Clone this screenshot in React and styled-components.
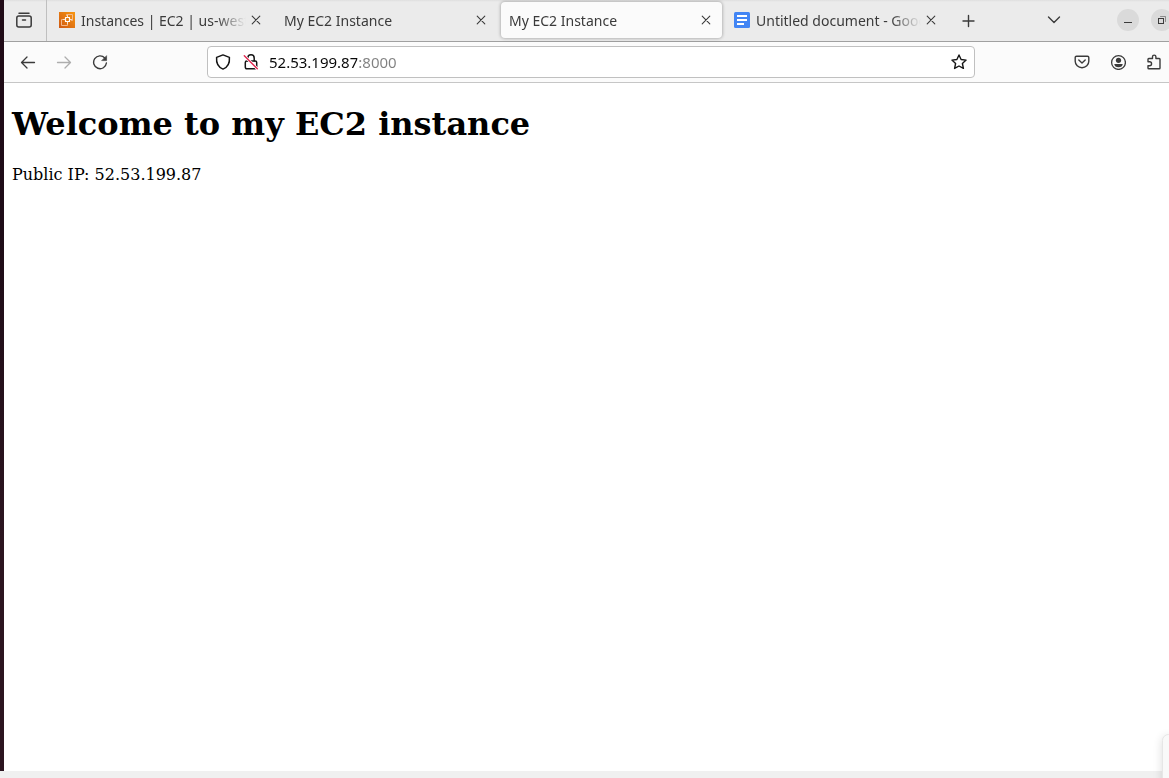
import React, { useState } from "react";
import styled, { createGlobalStyle } from "styled-components";

const GlobalStyle = createGlobalStyle`
  *, *::before, *::after { box-sizing: border-box; }
  body { margin: 0; background: #fff; }
  button, input { font: inherit; margin: 0; padding: 0; }
`;

const Desktop = styled.div`
  position: relative;
  display: flex;
  flex-direction: column;
  min-height: 100vh;
  overflow: hidden;
  font-family: "Noto Sans", "Open Sans", sans-serif;
  font-size: 14px;
  color: #3b3b3b;
`;

const Workspace = styled.div`
  display: flex;
  flex: 1;
`;

const Dock = styled.div`
  flex: none;
  width: 4px;
  background: linear-gradient(#200b17, #1e0c17 30%, #2c1520 70%);
`;

const BrowserWindow = styled.div`
  display: flex;
  flex-direction: column;
  flex: 1;
  min-width: 0;
  overflow: hidden;
  background: #fff;
`;

const TabBar = styled.header`
  display: flex;
  align-items: stretch;
  height: 42px;
  background: linear-gradient(#dedede, #ebebeb 2px);
  border-bottom: 1px solid #a0a0a0;
`;

const IconButton = styled.button`
  display: flex;
  align-items: center;
  justify-content: center;
  flex: none;
  width: ${(p) => p.$size || 32}px;
  height: ${(p) => p.$size || 32}px;
  border: 0;
  border-radius: 4px;
  background: none;
  color: #3b3b3b;
  opacity: ${(p) => (p.disabled ? 0.4 : 1)};

  &:hover:enabled { background: rgba(0, 0, 0, 0.08); }
`;

const RecentTabs = styled.div`
  display: flex;
  align-items: center;
  justify-content: center;
  flex: none;
  width: 43px;
  padding: 0 3px 2px 0;
  border-right: 1px solid #bfbfbf;
`;

const TabList = styled.nav`
  display: flex;
  align-items: flex-start;
  gap: 4px;
  min-width: 0;
  padding: 2px 5px 0 4px;
`;

const Tab = styled.div`
  display: flex;
  align-items: center;
  flex: 0 1 221px;
  width: 221px;
  min-width: 0;
  height: 36px;
  padding: 0 6px 0 8px;
  border-radius: 4px;
  background: ${(p) => (p.$active ? "#fbfbfb" : "transparent")};
  box-shadow: ${(p) => (p.$active ? "0 0 3px 1px rgba(0, 0, 0, 0.22)" : "none")};
`;

const TabButton = styled.button`
  display: flex;
  align-items: center;
  gap: 6px;
  flex: 1;
  min-width: 0;
  height: 100%;
  border: 0;
  background: none;
  color: inherit;
  text-align: left;
`;

const TabTitle = styled.span`
  flex: 1;
  min-width: 0;
  padding-top: 2px;
  overflow: hidden;
  white-space: nowrap;
  line-height: 20px;
  mask-image: linear-gradient(to left, transparent, #000 30px);
`;

const NewTab = styled.div`
  display: flex;
  align-items: center;
`;

const WindowControls = styled.div`
  display: flex;
  align-items: center;
  flex: none;
  gap: 12px;
  height: 40px;
  margin-left: auto;
  margin-right: -4px;
`;

const ListTabs = styled.div`
  margin-right: 35px;
`;

const RoundButton = styled.button`
  display: flex;
  align-items: center;
  justify-content: center;
  width: 22px;
  height: 22px;
  border: 0;
  border-radius: 50%;
  background: #dadada;
  color: #3b3b3b;
`;

const Toolbar = styled.div`
  display: flex;
  align-items: center;
  gap: 4px;
  height: 41px;
  padding-left: 8px;
  margin-right: -1px;
  background: #fbfbfb;
  border-bottom: 1px solid #c6c6c6;
`;

const AddressBar = styled.form`
  display: flex;
  align-items: center;
  flex: 1;
  min-width: 0;
  height: 32px;
  margin: 0 87px;
  border: 1px solid #c0c0c0;
  border-radius: 4px;
  background: #fff;
`;

const AddressButton = styled(IconButton)`
  width: ${(p) => p.$width || 30}px;
  height: 30px;
  color: #151515;
`;

const AddressInput = styled.input`
  flex: 1;
  min-width: 0;
  height: 24px;
  padding-left: 5px;
  border: 0;
  outline: 0;
  font-size: 15px;
  color: transparent;
  caret-color: #000;
  background: linear-gradient(90deg, #080808 93px, #808080 93px);
  background-clip: text;
`;

const Page = styled.main`
  padding: 0 8px;
  font-family: "DejaVu Serif", serif;
  font-size: 16px;
  color: #000;
`;

const Heading = styled.h1`
  margin: 23px 0 22px;
  font-size: 32px;
  line-height: 37px;
`;

const Address = styled.p`
  margin: 0;
  line-height: 19px;
`;

const BottomEdge = styled.div`
  flex: none;
  height: 7px;
  background: #f0f0f0;
`;

const CornerPanel = styled.div`
  position: absolute;
  right: -6px;
  bottom: -8px;
  width: 13px;
  height: 52px;
  border: 1px solid #e6e6e6;
  border-radius: 8px;
  background: #f9f9f9;
  box-shadow: 0 2px 10px rgba(0, 0, 0, 0.14);
`;

const Icon = ({ size = 16, children, ...rest }) => (
  <svg
    width={size}
    height={size}
    viewBox={`0 0 ${size} ${size}`}
    fill="none"
    stroke="currentColor"
    strokeWidth="1.3"
    strokeLinecap="round"
    strokeLinejoin="round"
    aria-hidden="true"
    {...rest}
  >
    {children}
  </svg>
);

const ArchiveIcon = () => (
  <Icon strokeWidth="1.5">
    <path d="M3 1.2h10" />
    <rect x="0.8" y="4" width="14.4" height="11" rx="2" />
    <path d="M6.5 8h3" />
  </Icon>
);
const CloseIcon = () => (
  <Icon size={10} strokeWidth="1.1">
    <path d="M1.2 1.2l7.6 7.6M8.8 1.2L1.2 8.8" />
  </Icon>
);
const PlusIcon = () => (
  <Icon strokeWidth="1.4">
    <path d="M8.5 2.5v11M3 8h11" />
  </Icon>
);
const ChevronIcon = () => (
  <Icon strokeWidth="1.4">
    <path d="M2.5 5L8 10.500l5.5-5.500" />
  </Icon>
);
const BackIcon = () => (
  <Icon>
    <path d="M14.5 8.5h-13M7 3L1.5 8.5 7 14" />
  </Icon>
);
const ForwardIcon = () => (
  <Icon>
    <path d="M1.5 8.5h13M9 3l5.5 5.5L9 14" />
  </Icon>
);
const ReloadIcon = () => (
  <Icon strokeWidth="1.4">
    <path d="M12.8 4A6.4 6.4 0 1 0 14.4 9" />
    <path d="M14.6 2v4.6H10z" fill="currentColor" strokeWidth="0.6" />
  </Icon>
);
const ShieldIcon = () => (
  <Icon strokeWidth="1.5">
    <path d="M8 .9l6.400 2.500c.5 5.700-1.500 9.800-6.400 11.700C3.100 13.200 1.100 9.100 1.600 3.400z" />
  </Icon>
);
const LockIcon = () => (
  <Icon strokeWidth="1.5">
    <path d="M4.800 7V4a3.200 3.200 0 0 1 6.400 0v3" />
    <rect x="2.300" y="7" width="11.400" height="7.800" rx="1.500" />
    <path d="M1 1.500l13.500 13.500" stroke="#fff" strokeWidth="3" />
    <path d="M1.300 1.800l13 13" stroke="#e22850" strokeWidth="1.400" />
  </Icon>
);
const StarIcon = () => (
  <Icon strokeWidth="1.400">
    <path d="M8 1l2.100 4.500 5 .600-3.700 3.400 1 4.900L8 12l-4.400 2.400 1-4.900L.900 6.100l5-.600z" />
  </Icon>
);
const PocketIcon = () => (
  <Icon strokeWidth="1.400">
    <path d="M2.500 2.200h11a1.300 1.300 0 0 1 1.300 1.300v3.700a6.800 6.500 0 0 1-13.600 0V3.500a1.300 1.300 0 0 1 1.300-1.300z" />
    <path d="M4.800 6L8 9l3.200-3" />
  </Icon>
);
const AccountIcon = () => (
  <Icon strokeWidth="1.300">
    <circle cx="8.500" cy="8.500" r="6.900" />
    <circle cx="8.500" cy="6.300" r="2.600" fill="currentColor" stroke="none" />
    <path d="M4.300 10h8.400c0 2-1.800 3.300-4.200 3.300S4.300 12 4.300 10z" fill="currentColor" stroke="none" />
  </Icon>
);
const PuzzleIcon = () => (
  <Icon strokeWidth="1.400">
    <path d="M2 7.800V5.300q0-.800.800-.800h3.700V2.800a1.700 1.700 0 0 1 3.400 0v1.700h3.300q.800 0 .800.800v8.700q0 .800-.800.800H2.800q-.800 0-.800-.800v-2.300h1.600a1.900 1.900 0 0 0 0-3.900z" />
  </Icon>
);
const MinimizeIcon = () => (
  <Icon size={10} strokeWidth="1" strokeLinecap="butt">
    <path d="M1 7.500h8" />
  </Icon>
);
const RestoreIcon = () => (
  <Icon size={10} strokeWidth="1" strokeLinejoin="miter">
    <rect x="1.500" y="3.500" width="5" height="5" />
    <path d="M3.500 1.500h5v5" opacity=".5" />
  </Icon>
);
const Ec2Icon = () => (
  <Icon strokeWidth="1">
    <defs>
      <linearGradient id="ec2" x1="0" y1="1" x2="1" y2="0">
        <stop offset="0" stopColor="#cf5914" />
        <stop offset="1" stopColor="#f89710" />
      </linearGradient>
    </defs>
    <path d="M0 0h16v16H0z" fill="url(#ec2)" stroke="none" />
    <rect x="6.500" y="5.500" width="4" height="4" stroke="#fff" strokeWidth="1.200" />
    <path d="M7.500 3.500v-1H13.500v6h-1M4.500 7.500h-2v6h6v-2" stroke="#f3b98c" />
    <path d="M8.500 3.500v1.500M4.500 7.500H6M11 7.500h1.500M8.500 10v1.500" stroke="#fbe4cf" />
  </Icon>
);
const DocsIcon = () => (
  <Icon strokeWidth="2" strokeLinecap="butt">
    <rect width="16" height="16" rx="1.500" fill="#4285f4" stroke="none" />
    <path d="M3 4h10M3 8h10M3 12h7" stroke="#fff" />
  </Icon>
);

const tabs = [
  { id: "ec2", title: "Instances | EC2 | us-west-1", icon: <Ec2Icon /> },
  { id: "first", title: "My EC2 Instance" },
  { id: "second", title: "My EC2 Instance" },
  { id: "docs", title: "Untitled document - Google Docs", icon: <DocsIcon /> },
];

export default function App() {
  const [active, setActive] = useState("second");
  const [url, setUrl] = useState("52.53.199.87:8000");

  return (
    <Desktop>
      <GlobalStyle />
      <Workspace>
        <Dock />
        <BrowserWindow>
          <TabBar>
            <RecentTabs>
              <IconButton aria-label="Recent browsing"><ArchiveIcon /></IconButton>
            </RecentTabs>
            <TabList aria-label="Browser tabs">
              {tabs.map((tab) => (
                <Tab key={tab.id} $active={tab.id === active}>
                  <TabButton onClick={() => setActive(tab.id)}>
                    {tab.icon}
                    <TabTitle>{tab.title}</TabTitle>
                  </TabButton>
                  <IconButton $size={20} aria-label="Close tab"><CloseIcon /></IconButton>
                </Tab>
              ))}
            </TabList>
            <NewTab>
              <IconButton aria-label="New tab"><PlusIcon /></IconButton>
            </NewTab>
            <WindowControls>
              <ListTabs>
                <IconButton aria-label="List all tabs"><ChevronIcon /></IconButton>
              </ListTabs>
              <RoundButton aria-label="Minimize"><MinimizeIcon /></RoundButton>
              <RoundButton aria-label="Restore"><RestoreIcon /></RoundButton>
            </WindowControls>
          </TabBar>
          <Toolbar>
            <IconButton aria-label="Back"><BackIcon /></IconButton>
            <IconButton aria-label="Forward" disabled><ForwardIcon /></IconButton>
            <IconButton aria-label="Reload"><ReloadIcon /></IconButton>
            <AddressBar onSubmit={(e) => e.preventDefault()}>
              <AddressButton type="button" aria-label="Tracking protection"><ShieldIcon /></AddressButton>
              <AddressButton type="button" $width={26} aria-label="Connection not secure"><LockIcon /></AddressButton>
              <AddressInput
                aria-label="Address"
                value={url}
                onChange={(e) => setUrl(e.target.value)}
              />
              <AddressButton type="button" aria-label="Bookmark this page"><StarIcon /></AddressButton>
            </AddressBar>
            <IconButton aria-label="Save to Pocket"><PocketIcon /></IconButton>
            <IconButton aria-label="Account"><AccountIcon /></IconButton>
            <IconButton aria-label="Extensions"><PuzzleIcon /></IconButton>
          </Toolbar>
          <Page>
            <Heading>Welcome to my EC2 instance</Heading>
            <Address>Public IP: 52.53.199.87</Address>
          </Page>
        </BrowserWindow>
      </Workspace>
      <BottomEdge />
      <CornerPanel />
    </Desktop>
  );
}
